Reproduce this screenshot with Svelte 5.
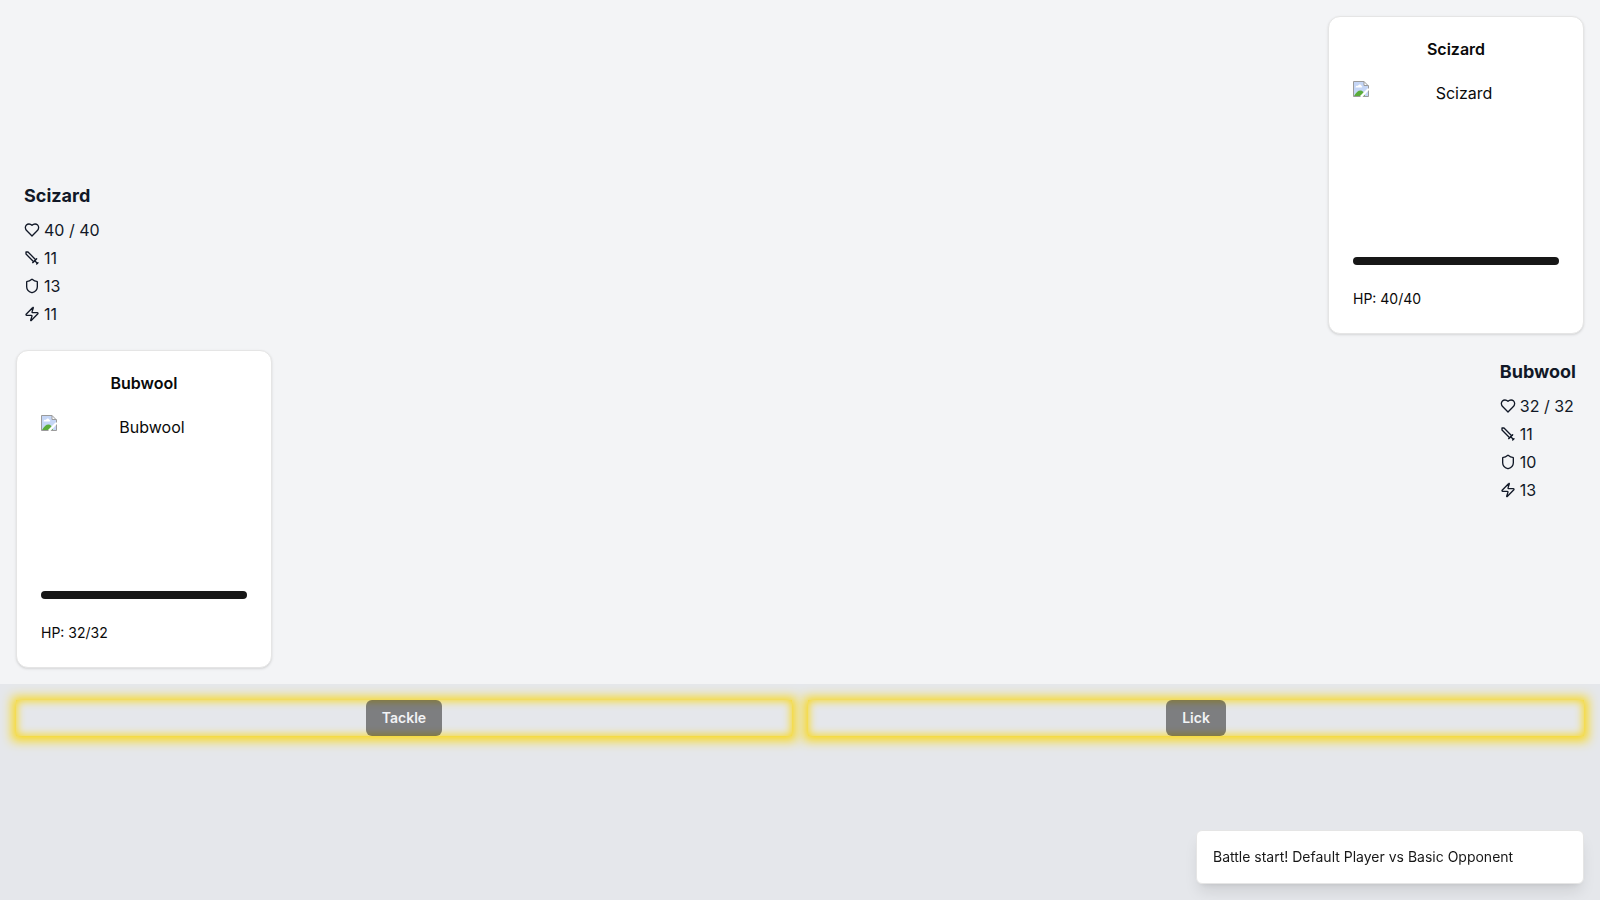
<script>
  const foe = { name: 'Scizard', hp: 40, maxHp: 40, attack: 11, defense: 13, speed: 11 };
  const own = { name: 'Bubwool', hp: 32, maxHp: 32, attack: 11, defense: 10, speed: 13 };
  const moves = ['Tackle', 'Lick'];
</script>

{#snippet icon(kind)}
  <svg class="icon" viewBox="0 0 24 24" aria-hidden="true">
    {#if kind === 'heart'}
      <path d="M19 14c1.49-1.46 3-3.21 3-5.5A5.5 5.5 0 0 0 16.5 3c-1.76 0-3 .5-4.5 2-1.5-1.5-2.74-2-4.5-2A5.5 5.5 0 0 0 2 8.5c0 2.3 1.5 4.05 3 5.5l7 7Z" />
    {:else if kind === 'sword'}
      <polyline points="14.5 17.5 3 6 3 3 6 3 17.5 14.5" />
      <line x1="13" x2="19" y1="19" y2="13" />
      <line x1="16" x2="20" y1="16" y2="20" />
      <line x1="19" x2="21" y1="21" y2="19" />
    {:else if kind === 'shield'}
      <path d="M20 13c0 5-3.5 7.5-7.66 8.95a1 1 0 0 1-.67-.01C7.5 20.5 4 18 4 13V6a1 1 0 0 1 1-1c2 0 4.5-1.2 6.24-2.72a1.17 1.17 0 0 1 1.52 0C14.51 3.81 17 5 19 5a1 1 0 0 1 1 1z" />
    {:else}
      <path d="M4 14a1 1 0 0 1-.78-1.63l9.9-10.2a.5.5 0 0 1 .86.46l-1.92 6.02A1 1 0 0 0 13 10h7a1 1 0 0 1 .78 1.63l-9.9 10.2a.5.5 0 0 1-.86-.46l1.92-6.02A1 1 0 0 0 11 14z" />
    {/if}
  </svg>
{/snippet}

{#snippet stats(m)}
  <section class="stats">
    <h2>{m.name}</h2>
    <ul>
      <li>{@render icon('heart')}<span>{m.hp} / {m.maxHp}</span></li>
      <li>{@render icon('sword')}<span>{m.attack}</span></li>
      <li>{@render icon('shield')}<span>{m.defense}</span></li>
      <li>{@render icon('zap')}<span>{m.speed}</span></li>
    </ul>
  </section>
{/snippet}

{#snippet card(m)}
  <article class="card">
    <h3>{m.name}</h3>
    <div class="portrait">
      <svg class="missing" viewBox="0 0 16 16" aria-hidden="true">
        <path d="M0.5 0.5H11L15.5 5V15.5H0.5Z" fill="#c5d6f6" />
        <path d="M2.5 6.5C2.5 5 4 4.500 5 5C5.500 3 8 3 8.500 5C9.500 5 9.500 6.500 8.500 6.500Z" fill="#fff" />
        <path d="M1 15C3 11.500 5 9.500 7.500 9.500C9.500 9.500 11 11 12 15Z" fill="#5aac3a" />
        <path d="M11 0.500V5H15.500Z" fill="#fff" />
        <path d="M0.5 15.500V0.500H11L15.500 5V15.500ZM11 0.500V4.500H15.500" fill="none" stroke="#9b9b9b" />
        <path d="M14.500 7.500H16V9L9.500 16H7.500V14.500Z" fill="#fff" />
      </svg>
      <span>{m.name}</span>
    </div>
    <div class="bar" role="progressbar" aria-label="HP" aria-valuemin="0" aria-valuemax={m.maxHp} aria-valuenow={m.hp}>
      <div class="fill" style="width: {(m.hp / m.maxHp) * 100}%"></div>
    </div>
    <p>HP: {m.hp}/{m.maxHp}</p>
  </article>
{/snippet}

<div class="game">
  <main class="field">
    <div class="row foe">{@render stats(foe)}{@render card(foe)}</div>
    <div class="row own">{@render card(own)}{@render stats(own)}</div>
  </main>
  <div class="actions">
    {#each moves as move}
      <div class="slot"><button type="button">{move}</button></div>
    {/each}
  </div>
  <div class="toast" role="status">Battle start! Default Player vs Basic Opponent</div>
</div>

<style>
  :global(body) {
    margin: 0;
  }
  .game,
  .game * {
    box-sizing: border-box;
  }
  .game {
    min-height: 100vh;
    display: flex;
    flex-direction: column;
    background: #f3f4f6;
    color: #111827;
    font: 16px/24px Inter, 'Liberation Sans', sans-serif;
  }
  h2, h3, p, ul {
    margin: 0;
    padding: 0;
  }
  .field {
    display: flex;
    flex-direction: column;
    gap: 16px;
    padding: 16px;
  }
  .row {
    display: flex;
    justify-content: space-between;
  }
  .foe .stats {
    align-self: flex-end;
  }
  .own .stats {
    align-self: flex-start;
  }
  .stats {
    padding: 8px;
  }
  .stats h2 {
    margin-bottom: 8px;
    font-size: 18px;
    line-height: 28px;
    font-weight: 700;
  }
  .stats ul {
    display: flex;
    flex-direction: column;
    gap: 4px;
    list-style: none;
  }
  .stats li {
    display: flex;
    align-items: center;
    gap: 4px;
  }
  .icon {
    width: 16px;
    height: 16px;
    fill: none;
    stroke: currentColor;
    stroke-width: 2;
    stroke-linecap: round;
    stroke-linejoin: round;
  }
  .card {
    width: 256px;
    padding: 24px;
    border: 1px solid #e5e5e5;
    border-radius: 12px;
    background: #fff;
    color: #0a0a0a;
    box-shadow: 0 1px 3px rgb(0 0 0 / 0.1), 0 1px 2px -1px rgb(0 0 0 / 0.1);
  }
  .card h3 {
    margin-bottom: 24px;
    font-size: 16px;
    line-height: 16px;
    font-weight: 600;
    text-align: center;
  }
  .portrait {
    display: flex;
    height: 160px;
    margin-bottom: 16px;
  }
  .portrait span {
    flex: 1;
    text-align: center;
  }
  .missing {
    width: 16px;
    height: 16px;
  }
  .bar {
    height: 8px;
    margin-bottom: 24px;
    border-radius: 4px;
    background: #d1d1d1;
    overflow: hidden;
  }
  .fill {
    height: 100%;
    background: #171717;
  }
  .card p {
    font-size: 14px;
    line-height: 20px;
  }
  .actions {
    flex: 1;
    display: grid;
    grid-template-columns: 1fr 1fr;
    align-content: start;
    gap: 16px;
    padding: 16px;
    background: #e5e7eb;
  }
  .slot {
    display: flex;
    justify-content: center;
    box-shadow: 0 1px 10px 4px #f8d820, inset 0 0 8px 1px #f8d820;
  }
  button {
    height: 36px;
    padding: 8px 16px;
    border: 0;
    border-radius: 6px;
    background: #171717;
    color: #fff;
    font: 600 14px/20px Inter, 'Liberation Sans', sans-serif;
    opacity: 0.5;
  }
  .toast {
    position: fixed;
    right: 16px;
    bottom: 16px;
    width: 388px;
    padding: 16px;
    border: 1px solid #e5e5e5;
    border-radius: 6px;
    background: #fff;
    color: #171717;
    font-size: 14px;
    line-height: 20px;
    box-shadow: 0 10px 15px -3px rgb(0 0 0 / 0.1), 0 4px 6px -4px rgb(0 0 0 / 0.1);
  }
</style>
